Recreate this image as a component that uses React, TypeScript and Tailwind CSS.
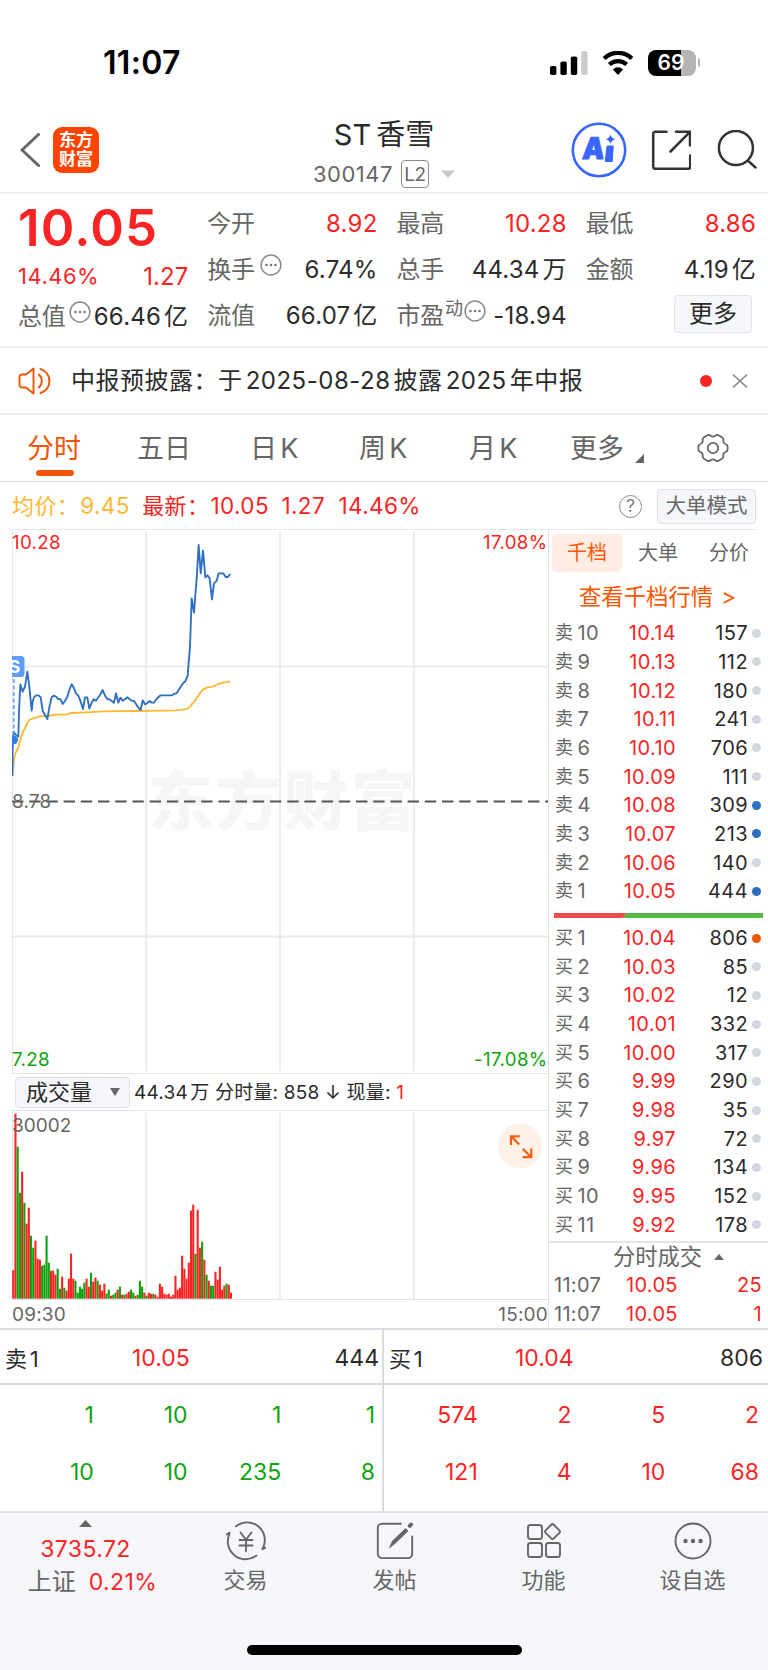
import clsx from "clsx";
import { FC, ReactNode } from "react";

interface Level {
  label: string;
  price: string;
  qty: string;
  dot?: "blue" | "orange";
}

const sells: Level[] = [
  { label: "卖10", price: "10.14", qty: "157" },
  { label: "卖9", price: "10.13", qty: "112" },
  { label: "卖8", price: "10.12", qty: "180" },
  { label: "卖7", price: "10.11", qty: "241" },
  { label: "卖6", price: "10.10", qty: "706" },
  { label: "卖5", price: "10.09", qty: "111" },
  { label: "卖4", price: "10.08", qty: "309", dot: "blue" },
  { label: "卖3", price: "10.07", qty: "213", dot: "blue" },
  { label: "卖2", price: "10.06", qty: "140" },
  { label: "卖1", price: "10.05", qty: "444", dot: "blue" },
];

const buys: Level[] = [
  { label: "买1", price: "10.04", qty: "806", dot: "orange" },
  { label: "买2", price: "10.03", qty: "85" },
  { label: "买3", price: "10.02", qty: "12" },
  { label: "买4", price: "10.01", qty: "332" },
  { label: "买5", price: "10.00", qty: "317" },
  { label: "买6", price: "9.99", qty: "290" },
  { label: "买7", price: "9.98", qty: "35" },
  { label: "买8", price: "9.97", qty: "72" },
  { label: "买9", price: "9.96", qty: "134" },
  { label: "买10", price: "9.95", qty: "152" },
  { label: "买11", price: "9.92", qty: "178" },
];

// one entry per minute, negative = falling minute
const volumes = [
  28.5, 185, -152, -106, 127, -96, 75, 91, -63, -51, 58, 40, 39, -33, -34, -63,
  -36, 28, 28, 24, -30, -10, 22, -11, 8, 20, 45, 20, -18, -6, -12, -10, -16,
  20, 12, -26, 17, 21, -18, 14, 8, 15, -5, -9, 3, -4, -6, 9, -12, 4, -4, 5, 7,
  -9, -6, 3, -4, -18, -12, 6, -3, 6, 5, -5, 4, 2, 15, 12, 5, 4, 5, 2, 4, 23, 9,
  11, 43, 30, 20, 36, 88, 94, -45, 89, 51, -57, 39, -24, 18, -13, -13, 27, 19,
  32, 9, 13, -15, 14, 6,
];

const priceLine =
  "37,768 38,680 41,635 48,645 55,650 57,575 61,493 68,515 75,500 82,455 88,500 95,572 98,545 102,532 108,526 115,526 122,532 128,573 135,585 142,597 148,562 155,532 161,527 168,530 175,537 182,538 188,552 195,543 202,530 208,510 215,493 222,505 228,520 235,527 242,545 249,567 255,532 262,532 268,566 275,548 281,538 288,542 295,532 302,522 308,510 315,527 322,537 328,538 335,543 342,548 348,520 355,548 361,533 368,542 375,538 382,532 388,537 395,542 402,543 408,552 415,563 422,570 428,541 435,553 442,549 449,543 455,548 462,548 469,538 475,532 482,526 516,526 523,521 530,520 536,510 543,499 549,490 556,484 563,467 565,440 570,380 575,235 582,278 590,175 596,75 602,160 609,92 616,172 622,166 629,175 636,238 642,190 650,182 656,160 670,160 677,171 684,171 690,161";

const avgLine =
  "37,768 42,715 48,695 55,683 62,655 69,635 75,625 82,608 88,600 95,597 108,592 122,589 142,588 168,584 200,583 215,579 260,577 310,574 400,573 480,572 525,571 550,568 563,566 570,560 577,551 584,544 590,534 597,524 603,515 610,508 623,502 640,499 655,492 670,488 690,484";

const MoreDots: FC<{ className?: string }> = ({ className }) => (
  <svg viewBox="0 0 22 22" className={clsx("w-[22px] h-[22px] shrink-0", className)}>
    <circle cx="11" cy="11" r="9.9" fill="none" stroke="#8a8a8a" strokeWidth="1.5" />
    <circle cx="6.5" cy="11" r="1.3" fill="#777" />
    <circle cx="11" cy="11" r="1.3" fill="#777" />
    <circle cx="15.5" cy="11" r="1.3" fill="#777" />
  </svg>
);

const StatusBar = () => (
  <div className="flex h-[112px] items-center justify-between pl-[103px] pr-[68px] pt-[13px]">
    <span className="text-[32px] font-semibold tracking-[0.3px] text-black">11:07</span>
    <div className="flex items-center">
      <svg viewBox="0 0 38 24" className="mr-[14px] h-6 w-[38px]">
        <rect x="0" y="15" width="6.4" height="9" rx="1.8" />
        <rect x="10.4" y="10.5" width="6.4" height="13.5" rx="1.8" />
        <rect x="20.8" y="5.5" width="6.4" height="18.5" rx="1.8" />
        <rect x="31.2" y="0" width="6.4" height="24" rx="1.8" fill="#cbcbcb" />
      </svg>
      <svg viewBox="0 0 32 24" className="mr-[14px] h-6 w-8">
        <path d="M2.2 8.8a19.8 19.8 0 0 1 27.6 0" fill="none" stroke="#000" strokeWidth="4.4" transform="translate(0 -1.3)" />
        <path d="M7.4 14.6a12.4 12.4 0 0 1 17.2 0" fill="none" stroke="#000" strokeWidth="4.2" transform="translate(0 -1)" />
        <path d="M10.9 18.4a7.3 7.3 0 0 1 10.2 0L16 24z" />
      </svg>
      <div className="flex h-[26px] w-[48px] items-center justify-center rounded-[8px] bg-[linear-gradient(90deg,#000_69%,#b4b4b4_69%)] pr-[2px] text-[21px] font-semibold text-white">
        69
      </div>
      <div className="ml-[2px] h-[9px] w-[2px] rounded-r-full bg-[#b4b4b4]" />
    </div>
  </div>
);

const Header = () => (
  <div className="grid h-[82px] grid-cols-[1fr_auto_1fr] border-b-2 border-[#eeeeee]">
    <div className="flex h-[75px] items-center pl-[19px]">
      <svg viewBox="0 0 21 34" className="mr-[13px] h-[34px] w-[21px]" fill="none" stroke="#666" strokeWidth="3">
        <path d="M19.500 1.500 3 17l16.500 15.500" strokeLinejoin="round" strokeLinecap="round" />
      </svg>
      <div className="flex h-[46px] w-[46px] flex-col items-center justify-center rounded-[9px] bg-[#ff4400] text-[17px] font-bold leading-[19px] text-white">
        <span>东方</span>
        <span>财富</span>
      </div>
    </div>
    <div className="flex flex-col items-center">
      <div className="flex h-11 items-center text-[29px] text-[#2b2b2b]">
        <span className="mr-[5px]">ST</span>
        <span>香雪</span>
      </div>
      <div className="flex h-9 items-center text-[22px] text-[#666]">
        <span className="tracking-[0.5px]">300147</span>
        <span className="ml-[8px] flex h-[28px] w-[28px] items-center justify-center rounded-[4px] border-[1.5px] border-[#8a8a8a] text-[19px] tracking-[-0.5px]">
          L2
        </span>
        <svg viewBox="0 0 14 8" className="ml-[12px] h-2 w-[14px]">
          <path d="M0 .5h14L7 8z" fill="#c8c8c8" />
        </svg>
      </div>
    </div>
    <div className="flex h-[75px] items-center justify-end pr-[11px]">
      <svg viewBox="0 0 56 56" className="mr-[24px] h-14 w-14">
        <circle cx="28" cy="28" r="26.2" fill="none" stroke="#3a66ff" strokeWidth="2.6" />
        <text
          x="0"
          y="0"
          fontSize="30"
          fontWeight="900"
          fill="#3a66ff"
          stroke="#3a66ff"
          strokeWidth="1"
          strokeLinejoin="round"
          transform="translate(10.8 37.2) skewX(-5) scale(.92 1)"
        >
          A
        </text>
        <path d="M36 24h6.300l-1.100 15.500h-6.900z" fill="#3a66ff" stroke="#3a66ff" strokeLinejoin="round" />
        <path d="M39.500 12.500q1 3.700 4.700 4.700-3.700 1-4.700 4.700-1-3.700-4.700-4.700 3.700-1 4.700-4.700z" fill="#3a66ff" />
      </svg>
      <svg viewBox="0 0 40 40" className="mr-[26px] h-10 w-10" fill="none" stroke="#333" strokeWidth="2.5" strokeLinecap="round">
        <path d="M15.500 1.800H4.200a2 2 0 0 0-2 2v33a2 2 0 0 0 2 2h33a2 2 0 0 0 2-2V25.500M25 1.800h14V15.500M38.500 2.400 19.500 21.500" />
      </svg>
      <svg viewBox="0 0 40 40" className="h-10 w-10" fill="none" stroke="#333" strokeWidth="2.5" strokeLinecap="round">
        <circle cx="18.900" cy="18" r="17" />
        <path d="M31.200 30.800 38.500 37.500" />
      </svg>
    </div>
  </div>
);

interface StatProps {
  label: string;
  value?: string;
  red?: boolean;
  children?: ReactNode;
}

const Stat: FC<StatProps> = ({ label, value, red, children }) => (
  <div className="flex h-[46px] items-center">
    <span className="text-[24px] tracking-[-0.3px] text-[#666]">{label}</span>
    {children}
    <span className={clsx("ml-auto whitespace-nowrap tracking-[0.2px]", red ? "text-[#fa2424]" : "text-[#2b2b2b]")}>{value}</span>
  </div>
);

const Quote = () => (
  <div className="grid h-[154px] grid-cols-4 gap-x-[19px] border-b-2 border-[#edeff3] pl-[18px] pr-[12px] pt-[7px] text-[24px] [text-autospace:normal]">
    <div>
      <div className="flex h-[52px] items-center text-[51px] font-semibold tracking-[1.2px] text-[#fa2424]">10.05</div>
      <div className="flex h-[46px] items-center justify-between text-[#fa2424]">
        <span className="text-[22px] tracking-[0.5px]">14.46%</span>
        <span className="pt-[2px]">1.27</span>
      </div>
      <div className="flex h-[36px] items-center">
        <span className="tracking-[-0.3px] text-[#666]">总值</span>
        <MoreDots className="-mt-[10px] ml-[4px]" />
        <span className="ml-auto whitespace-nowrap tracking-[0.2px] text-[#2b2b2b]">66.46亿</span>
      </div>
    </div>
    <div>
      <Stat label="今开" value="8.92" red />
      <Stat label="换手" value="6.74%">
        <MoreDots className="-mt-[10px] ml-[5px]" />
      </Stat>
      <Stat label="流值" value="66.07亿" />
    </div>
    <div>
      <Stat label="最高" value="10.28" red />
      <Stat label="总手" value="44.34万" />
      <Stat label="市盈" value="-18.94">
        <span className="-mt-[14px] ml-[1px] text-[18px] text-[#666]">动</span>
        <MoreDots className="-mt-[10px] ml-[1px]" />
      </Stat>
    </div>
    <div>
      <Stat label="最低" value="8.86" red />
      <Stat label="金额" value="4.19亿" />
      <button className="ml-auto mr-[4px] mt-[2px] flex h-[38px] w-[78px] items-center justify-center rounded-[4px] border border-[#dfe2e8] bg-[#f6f7fa] text-[24px] text-[#2b2b2b]">
        更多
      </button>
    </div>
  </div>
);

const Notice = () => (
  <div className="flex h-[67px] items-center border-b-2 border-[#edeff1] pl-[18px] pr-5">
    <svg viewBox="0 0 33 28" className="h-7 w-[33px]" fill="none" stroke="#ee5500" strokeWidth="1.9" strokeLinejoin="round" strokeLinecap="round">
      <path d="M15.500 1.500v25L8 20.500H4a2.500 2.500 0 0 1-2.500-2.500v-8A2.500 2.500 0 0 1 4 7.500h4z" />
      <path d="M20.800 7.500a8.500 8.500 0 0 1 0 13M22.500 1.800c12 5 12 19.400 0 24.400" />
    </svg>
    <span className="ml-[20px] whitespace-nowrap text-[24px] tracking-[0.52px] text-[#2b2b2b] [text-autospace:normal]">
      中报预披露：于2025-08-28披露2025年中报
    </span>
    <span className="ml-auto h-3 w-3 rounded-full bg-[#fa2424]" />
    <svg viewBox="0 0 16 16" className="ml-[20px] h-4 w-4" stroke="#888" strokeWidth="1.7">
      <path d="M1 1.500 15 14.500M15 1.500 1 14.500" />
    </svg>
  </div>
);

const Tabs = () => (
  <div className="flex h-[67px] items-center border-b border-[#d8dce2] pl-[27px] text-[27px] text-[#666] [text-autospace:normal]">
    <div className="relative w-[110px] text-[#ee5500]">
      分时
      <span className="absolute -bottom-[14px] left-[9px] h-[6px] w-[38px] rounded-[3px] bg-[#ee5500]" />
    </div>
    <div className="w-[113px]">五日</div>
    <div className="w-[109px]">日K</div>
    <div className="w-[110px]">周K</div>
    <div className="w-[101px]">月K</div>
    <div className="w-[65px]">更多</div>
    <svg viewBox="0 0 9 9" className="mt-[20px] h-[9px] w-[9px]">
      <path d="M9 0v9H0z" fill="#666" />
    </svg>
    <svg viewBox="0 0 32 30" className="ml-[53px] h-[30px] w-8" fill="none" stroke="#666" strokeWidth="1.8" strokeLinejoin="round">
      <path d="M10 2.500Q12 1 14 3q2 1.300 4 0 2-2 4-.5l3 1.800q1.800 1.200 1.300 3.500-.1 2.200 2 3.200 2.300.8 2.300 2.600v2.800q0 1.800-2.300 2.600-2.100 1-2 3.200.5 2.300-1.300 3.500l-3 1.800q-2 1.500-4-.5-2-1.300-4 0-2 2-4 .5l-3-1.800q-1.800-1.200-1.300-3.500.1-2.200-2-3.200-2.300-.8-2.300-2.600v-2.800q0-1.800 2.300-2.600 2.100-1 2-3.200Q5.200 5.500 7 4.300z" />
      <circle cx="16" cy="15" r="5.200" />
    </svg>
  </div>
);

const InfoRow = () => (
  <div className="mx-3 flex h-12 items-center border-b border-[#e6e6ea] pt-[1px] text-[22.5px] tracking-[0.4px]">
    <span className="text-[22px] text-[#fdb731]">均价：</span>
    <span className="ml-[1px] w-[62px] text-[#fdb731]">9.45</span>
    <span className="text-[22px] text-[#fa2424]">最新：</span>
    <span className="ml-[1px] w-[71px] text-[#fa2424]">10.05</span>
    <span className="w-[57px] text-[#fa2424]">1.27</span>
    <span className="text-[#fa2424]">14.46%</span>
    <span className="ml-auto flex h-[23px] w-[23px] items-center justify-center rounded-full border-[1.5px] border-[#8a8a8a] text-[17px] tracking-normal text-[#777]">
      ?
    </span>
    <button className="ml-[15px] flex h-[35px] w-[99px] items-center justify-center rounded-[4px] border border-[#dfe2e8] bg-[#f6f7fa] text-[20.5px] tracking-normal text-[#666]">
      大单模式
    </button>
  </div>
);

const PriceChart = () => (
  <svg viewBox="0 0 536 543" className="block h-[543px] w-[536px] overflow-hidden">
    <text x="136" y="295" fontSize="65" fontWeight="900" letterSpacing="2.5" fill="#f6f6f6">东方财富</text>
    <g stroke="#e8eaf1" strokeWidth="1.8">
      <path d="M134 2v539M268 2v539M402 2v539M0 136.700h536M0 406.500h536" />
    </g>
    <path d="M.5 0v543" stroke="#e6e6ea" />
    <path d="M0 271.500h536" stroke="#555" strokeWidth="1.8" strokeDasharray="11.400 5.800" />
    <g transform="translate(-12 -10) scale(.33333)" fill="none" strokeWidth="5.6" strokeLinejoin="round">
      <polyline points={avgLine} stroke="#fdb731" />
      <polyline points={priceLine} stroke="#2f6fc1" />
    </g>
    <path d="M1.800 149v55" stroke="#5c9dfb" strokeWidth="1.6" strokeDasharray="4 2.500" />
    <circle cx="1.800" cy="210" r="4.2" fill="#2f7be8" />
    <rect x="-8" y="126" width="20.5" height="21" rx="3.5" fill="#5c9dfb" />
    <text x="-3.5" y="143" fontSize="18" fontWeight="700" fill="#fff">S</text>
    <g fontSize="18.7" letterSpacing=".35">
      <text x="0" y="19" fill="#fa2424">10.28</text>
      <text x="535.5" y="19" fill="#fa2424" textAnchor="end">17.08%</text>
      <text x="0" y="278" fill="#666">8.78</text>
      <text x="0" y="536" fill="#0ea30e">7.28</text>
      <text x="535.5" y="536" fill="#0ea30e" textAnchor="end">-17.08%</text>
    </g>
  </svg>
);

const VolumeChart = () => (
  <svg viewBox="0 0 536 188" className="block h-[188px] w-[536px]">
    <path d="M134 2v186M268 2v186M402 2v186" stroke="#e8ebf1" strokeWidth="1.8" />
    <path d="M.5 0v188" stroke="#e6e6ea" />
    {volumes.map((v, i) => (
      <rect
        key={i}
        x={0.2 + i * 2.222}
        y={187.7 - Math.abs(v)}
        width="2.1"
        height={Math.abs(v)}
        fill={v > 0 ? "#fa2424" : "#0ea30e"}
      />
    ))}
    <text x="0" y="20.500" fontSize="19" fill="#666">30002</text>
    <circle cx="508" cy="35" r="22" fill="#fff0e8" />
    <path d="M499 34v-8.700h8.700M499.500 25.800l7.700 7.700M519.300 37.500V46.200h-8.700M518.800 45.700l-8-8" fill="none" stroke="#f2600f" strokeWidth="2.2" />
  </svg>
);

const LevelRow: FC<{ item: Level }> = ({ item }) => (
  <div className="flex h-[28.67px] items-center text-[20px] tracking-[0.4px]">
    <span className="flex w-[60px] items-center text-[#666]">
      <span className="mr-[4px] text-[18px]">{item.label[0]}</span>
      {item.label.slice(1)}
    </span>
    <span className="w-[61px] text-right text-[#fa2424]">{item.price}</span>
    <span className="w-[72px] text-right text-[#2b2b2b]">{item.qty}</span>
    <span
      className={clsx(
        "ml-[4px] h-[9px] w-[9px] rounded-full",
        item.dot === "blue" && "bg-[#2f6fc1]",
        item.dot === "orange" && "bg-[#ee5500]",
        !item.dot && "bg-[#d4d7dd]"
      )}
    />
  </div>
);

const OrderBook = () => (
  <div className="flex w-[219px] flex-col">
    <div className="flex h-[46px] items-center pl-[3px] text-[20px] text-[#666]">
      <span className="flex h-[38px] w-[70px] items-center justify-center rounded-[5px] bg-[#ffece3] text-[#ff5500]">千档</span>
      <span className="ml-[16px]">大单</span>
      <span className="ml-[31px]">分价</span>
    </div>
    <div className="flex h-[43px] items-center justify-center pr-[2px] text-[22.4px] text-[#ff5500]">
      查看千档行情<span className="ml-[8px]">&gt;</span>
    </div>
    <div className="pl-[6px]">
      {sells.map((s) => (
        <LevelRow key={s.label} item={s} />
      ))}
    </div>
    <svg viewBox="0 0 209 5" className="mb-[6px] ml-[5px] mt-[7.3px] h-[5px] w-[209px]">
      <path d="M0 0h73l-4 5H0z" fill="#ee4b4b" />
      <path d="M73 0h136v5H69z" fill="#57b945" />
    </svg>
    <div className="pl-[6px]">
      {buys.map((b) => (
        <LevelRow key={b.label} item={b} />
      ))}
    </div>
    <div className="mt-[2px] flex h-[30px] items-center justify-center border-t-2 border-[#e2e4ea] pl-[20px] text-[22.3px] text-[#666]">
      分时成交
      <svg viewBox="0 0 10 6" className="ml-[12px] h-[6px] w-[10px]">
        <path d="M5 0l5 6H0z" fill="#666" />
      </svg>
    </div>
    {["25", "1"].map((q) => (
      <div key={q} className="flex h-[28.5px] shrink-0 items-center pl-[5px] pr-[6px] text-[20px] tracking-[0.3px] text-[#fa2424]">
        <span className="w-[72px] text-[#666]">11:07</span>
        <span>10.05</span>
        <span className="ml-auto">{q}</span>
      </div>
    ))}
  </div>
);

const DepthHalf: FC<{ label: string; price: string; qty: string; rows: string[][]; sell?: boolean }> = ({
  label,
  price,
  qty,
  rows,
  sell,
}) => (
  <div className={clsx("w-[384px]", sell && "border-r-2 border-[#d9dbe2]")}>
    <div
      className={clsx(
        "grid h-[55px] items-center border-b-2 border-[#d9dbe2] pl-[5px] pt-[4px] text-[23px] text-[#2b2b2b]",
        sell ? "grid-cols-[127px_1fr_auto] pr-[3px]" : "grid-cols-[126px_1fr_auto] pr-[5px]"
      )}
    >
      <span className="text-[22px] [text-autospace:normal]">{label}</span>
      <span className="text-[#fa2424]">{price}</span>
      <span>{qty}</span>
    </div>
    <div className={clsx("pt-[2px] text-[23px]", sell ? "pr-[7px] text-[#0ea30e]" : "pr-[9px] text-[#fa2424]")}>
      {rows.map((row, i) => (
        <div key={i} className="grid h-[57px] grid-cols-4 items-center text-right">
          {row.map((n, j) => (
            <span key={j}>{n}</span>
          ))}
        </div>
      ))}
    </div>
  </div>
);

const NavItem: FC<{ label: string; children: ReactNode }> = ({ label, children }) => (
  <div className="flex w-[149px] flex-col items-center pt-[8px] text-[22px] text-[#666]">
    <svg viewBox="0 0 40 40" className="h-10 w-10" fill="none" stroke="#666" strokeWidth="1.9" strokeLinecap="round" strokeLinejoin="round">
      {children}
    </svg>
    <span className="mt-[3px] leading-8">{label}</span>
  </div>
);

const BottomNav = () => (
  <div className="flex h-[159px] flex-col border-t-2 border-[#e0e2e8] bg-[#f6f7fa]">
    <div className="flex h-[132px]">
      <div className="flex w-[171px] flex-col items-center text-[23px] tracking-[0.4px] text-[#fa2424]">
        <svg viewBox="0 0 13 7" className="mt-[7px] h-[7px] w-[13px]">
          <path d="M6.500 0 13 7H0z" fill="#666" />
        </svg>
        <span className="mt-[5px] leading-[34px]">3735.72</span>
        <span className="flex items-center pl-[14px] leading-8">
          <span className="mr-[13px] text-[24px] tracking-normal text-[#666]">上证</span>0.21%
        </span>
      </div>
      <NavItem label="交易">
        <path d="M10 5.200A17.800 17.800 0 0 1 37 27l-.6 1.200 2.800-1.600M30.500 34.500A17.800 17.800 0 0 1 3 14l.5-2.200L.8 13.500" />
        <path d="M14.500 11.500 20 18.500l5.500-7M20 18.500V30M13.500 19h13M13.500 24.500h13" />
      </NavItem>
      <NavItem label="发帖">
        <path d="M26 2.700H7A4.200 4.200 0 0 0 2.800 6.900v26A4.200 4.200 0 0 0 7 37.100h26a4.200 4.200 0 0 0 4.200-4.200V15.500" />
        <path d="M14.500 26.500 17.500 20 30.500 7.500 33 10 20 22.500z" fill="#666" strokeWidth=".8" />
        <path d="M34.800 4.800 36 3.500" strokeWidth="4" />
      </NavItem>
      <NavItem label="功能">
        <rect x="4" y="4" width="14" height="14" rx="2.500" />
        <rect x="4" y="22" width="14" height="14" rx="2.500" />
        <rect x="22" y="22" width="14" height="14" rx="2.500" />
        <rect x="22.800" y="4.800" width="11.500" height="11.500" rx="1.800" transform="rotate(45 28.500 10.500)" />
      </NavItem>
      <NavItem label="设自选">
        <circle cx="20" cy="20" r="17.500" />
        <g fill="#666" stroke="none">
          <circle cx="12.500" cy="20" r="2.200" />
          <circle cx="20" cy="20" r="2.200" />
          <circle cx="27.500" cy="20" r="2.200" />
        </g>
      </NavItem>
    </div>
    <div className="mx-auto h-[10px] w-[275px] shrink-0 rounded-full bg-black" />
  </div>
);

const App: FC = () => (
  <div className="h-[1670px] w-[768px] overflow-hidden bg-white font-['Inter','Noto_Sans_CJK_SC',sans-serif] leading-none">
    <StatusBar />
    <Header />
    <Quote />
    <Notice />
    <Tabs />
    <InfoRow />
    <div className="flex h-[800px] border-b-2 border-[#d9dbe2]">
      <div className="w-[549px] border-r border-[#dfe2e8] pl-3">
        <PriceChart />
        <div className="flex h-[38px] items-center border-y border-[#dfe2e8] pl-[3px] text-[19px] text-[#2b2b2b]">
          <div className="flex h-[31px] w-[115px] shrink-0 items-center justify-between rounded-[4px] border border-[#dfe2e8] bg-[#f6f7fa] pl-[10px] pr-[9px] text-[22px]">
            成交量
            <svg viewBox="0 0 10 8" className="h-2 w-[10px]">
              <path d="M0 0h10L5 8z" fill="#666" />
            </svg>
          </div>
          <span className="ml-[4px] whitespace-nowrap tracking-[0.2px] [text-autospace:normal]">
            44.34万 分时量: 858 ↓ 现量: <span className="text-[#fa2424]">1</span>
          </span>
        </div>
        <VolumeChart />
        <div className="flex h-[29px] items-center justify-between border-t border-[#dfe2e8] pt-[1px] text-[19px] tracking-[0.2px] text-[#666]">
          <span>09:30</span>
          <span>15:00</span>
        </div>
      </div>
      <OrderBook />
    </div>
    <div className="flex h-[181px]">
      <DepthHalf
        sell
        label="卖1"
        price="10.05"
        qty="444"
        rows={[
          ["1", "10", "1", "1"],
          ["10", "10", "235", "8"],
        ]}
      />
      <DepthHalf
        label="买1"
        price="10.04"
        qty="806"
        rows={[
          ["574", "2", "5", "2"],
          ["121", "4", "10", "68"],
        ]}
      />
    </div>
    <BottomNav />
  </div>
);

export default App;
